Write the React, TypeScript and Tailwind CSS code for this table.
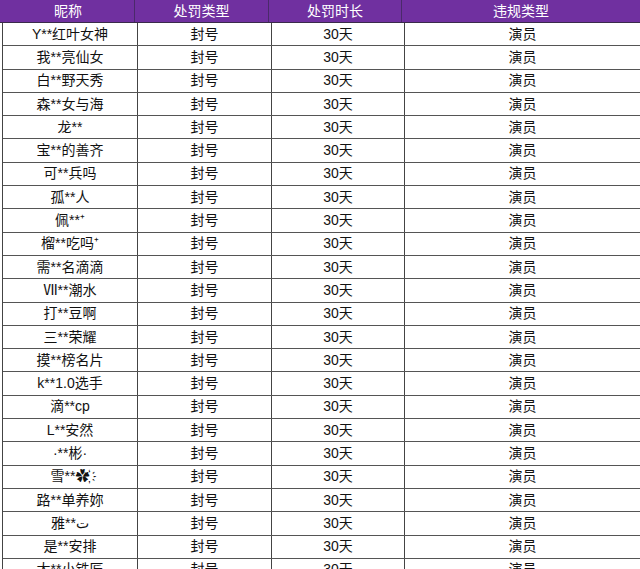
const names = [
  "Y**红叶女神",
  "我**亮仙女",
  "白**野天秀",
  "森**女与海",
  "龙**",
  "宝**的善齐",
  "可**兵吗",
  "孤**人",
  "佩**⁺",
  "榴**吃吗⁺",
  "需**名滴滴",
  "Ⅶ**潮水",
  "打**豆啊",
  "三**荣耀",
  "摸**榜名片",
  "k**1.0选手",
  "滴**cp",
  "L**安然",
  "·**彬·",
  "雪**✿҉",
  "路**单养妳",
  "雅**ت",
  "是**安排",
  "大**小铁匠",
];

const cols = "grid grid-cols-[134px_134px_133px_1fr]";

export default function App() {
  return (
    <div
      className="w-[640px] h-[569px] overflow-hidden bg-white text-[14px] text-[#111]"
      style={{ fontFamily: '"Liberation Sans", "Noto Sans CJK SC", sans-serif' }}
    >
      <div className={`${cols} h-[23px] bg-[#7030a0] text-white border-b border-[#3a2a4a]`}>
        <div className="flex items-center justify-center pl-[2px]">昵称</div>
        <div className="flex items-center justify-center border-l border-[#4a2a6a]">处罚类型</div>
        <div className="flex items-center justify-center border-l border-[#4a2a6a]">处罚时长</div>
        <div className="flex items-center justify-center border-l border-[#4a2a6a]">违规类型</div>
      </div>
      <div className="ml-[2px] border-l border-[#444]">
        {names.map((n) => (
          <div key={n} className={`${cols} h-[23.3px] border-b border-[#555]`}>
            <div className="flex items-center justify-center">{n}</div>
            <div className="flex items-center justify-center border-l border-[#444]">封号</div>
            <div className="flex items-center justify-center border-l border-[#444]">30天</div>
            <div className="flex items-center justify-center border-l border-[#444]">演员</div>
          </div>
        ))}
      </div>
    </div>
  );
}
